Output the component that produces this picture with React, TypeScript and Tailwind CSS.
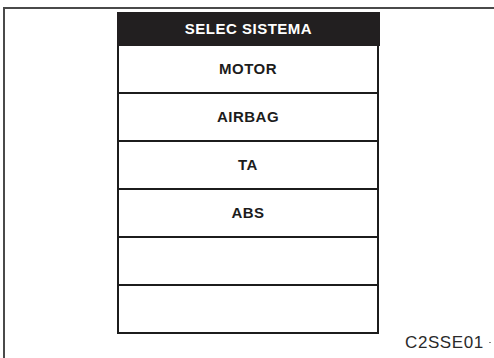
export default function App() {
  const rows = ['MOTOR', 'AIRBAG', 'TA', 'ABS', '', ''];

  return (
    <div className="w-[494px] h-[358px] overflow-hidden bg-white pl-[3px] pt-[7px] font-['Liberation_Sans',Arial,sans-serif]">
      {/* figure frame */}
      <div className="w-[520px] h-[360px] border-l-2 border-t-2 border-[#4a4a4a] pl-[112px] pt-[3px] flex items-start">
        <div className="flex flex-col w-[263px]">
          <div className="h-[34px] bg-[#221f20] flex items-center justify-center text-white text-[15px] font-bold tracking-[0.5px]">
            SELEC SISTEMA
          </div>
          {rows.map((label, i) => (
            <div
              key={i}
              className="h-[48px] w-[262px] border-x-2 border-b-2 border-[#1c1c1c] flex items-center justify-center text-[#1c1c1c] text-[15px] font-bold tracking-[0.5px]"
            >
              {label}
            </div>
          ))}
        </div>
        <div className="pl-[25px] pt-[322px] flex items-center gap-[5px]">
          <span className="text-[17px] leading-none text-[#2a2a2a] tracking-[0.6px]">C2SSE01</span>
          <span className="w-[2px] h-[1px] bg-[#888]"></span>
        </div>
      </div>
    </div>
  );
}
